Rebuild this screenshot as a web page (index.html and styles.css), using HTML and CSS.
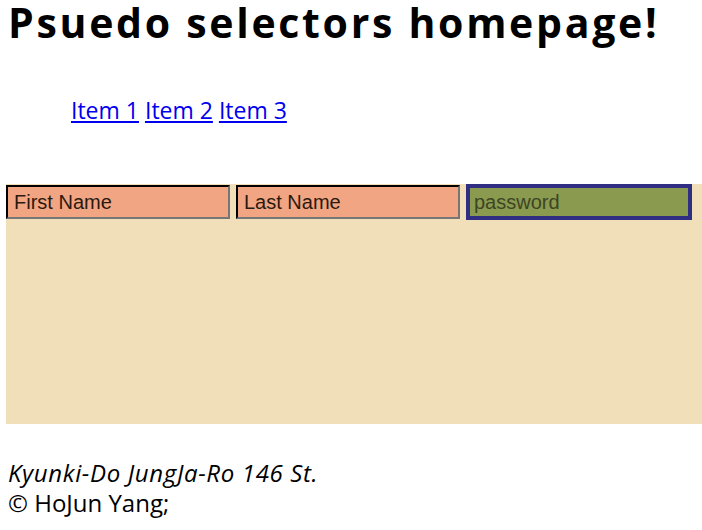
FILE: index.html
```html
<!DOCTYPE html>
<html>
<head>
<meta charset="utf-8">
<link rel="stylesheet" href="styles.css">
</head>
<body>
<h1 class="title">Psuedo selectors homepage!</h1>
<nav class="nav">
  <a href="#">Item 1</a> <a href="#">Item 2</a> <a href="#">Item 3</a>
</nav>
<form class="form">
  <input class="field" type="text" placeholder="First Name">
  <input class="field" type="text" placeholder="Last Name">
  <input class="field field-pass" type="password" placeholder="password">
</form>
<footer class="footer">
  <address class="addr">Kyunki-Do JungJa-Ro 146 St.</address>
  <div class="copy">© HoJun Yang;</div>
</footer>
</body>
</html>
```
FILE: styles.css
```css
html, body {
  margin: 0;
  padding: 0;
  background: #fff;
}
body {
  font-family: "Open Sans", "Noto Sans", sans-serif;
  color: #000;
}
.title {
  margin: -6px 0 0 0;
  padding: 0 0 0 8px;
  font-size: 41px;
  font-weight: 700;
  line-height: 56px;
  letter-spacing: 2.7px;
  white-space: nowrap;
}
.nav {
  padding: 45px 0 0 71px;
  font-size: 23px;
  line-height: 30px;
  height: 134px;
  box-sizing: border-box;
}
.nav a {
  color: #0000ee;
}
.form {
  margin: 0 0 0 6px;
  height: 240px;
  background: #f0dfb9;
  display: flex;
  align-items: flex-start;
  gap: 6px;
  box-sizing: border-box;
}
.field {
  width: 224px;
  height: 34px;
  box-sizing: border-box;
  margin: 1px 0 0 0;
  padding: 0 6px;
  font-family: "Liberation Sans", Arial, sans-serif;
  font-size: 20px;
  background: #f2a582;
  border: 2px inset #767676;
  border-top-color: #222;
  border-left-color: #222;
  color: #222;
}
.field::placeholder {
  color: #2a1a10;
  opacity: 1;
}
.field-pass {
  width: 226px;
  height: 36px;
  margin-top: 0;
  background: #8a9a4e;
  border: 4px solid #2f2e82;
  padding-left: 4px;
}
.field-pass::placeholder {
  color: #3d4525;
}
.footer {
  padding: 34px 0 0 8px;
  font-size: 24px;
  line-height: 30px;
}
.addr {
  font-style: italic;
  letter-spacing: 0.65px;
}
```
